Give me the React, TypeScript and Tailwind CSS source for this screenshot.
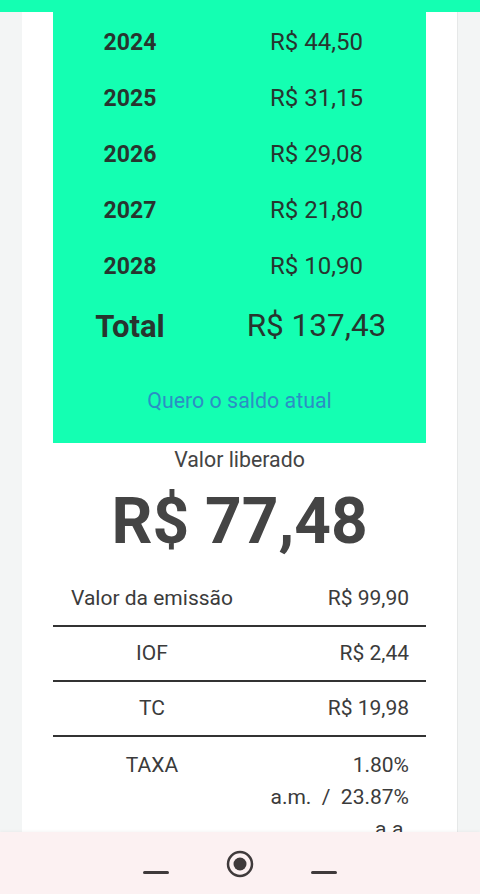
const years = [
  { year: "2024", value: "R$ 44,50" },
  { year: "2025", value: "R$ 31,15" },
  { year: "2026", value: "R$ 29,08" },
  { year: "2027", value: "R$ 21,80" },
  { year: "2028", value: "R$ 10,90" },
];

const details = [
  { label: "Valor da emissão", value: "R$ 99,90" },
  { label: "IOF", value: "R$ 2,44" },
  { label: "TC", value: "R$ 19,98" },
];

export default function App() {
  return (
    <div className="h-[894px] w-[480px] overflow-hidden flex flex-col bg-[#f3f5f5] font-['Roboto',sans-serif]">
      {/* top band, header scrolled away */}
      <div className="h-[12px] shrink-0 bg-[#14ffb2]" />

      <div className="flex-1 min-h-0 overflow-hidden mx-[22px] bg-white border-r border-[#e6e8e8]">
        {/* green summary box */}
        <div className="mx-[31px] bg-[#14ffb2] pt-[2px] h-[431px] text-[#27352f]">
          {years.map((r) => (
            <div key={r.year} className="grid grid-cols-[154px_1fr] h-[56px] items-center leading-none">
              <span className="text-center font-bold text-[23px]">{r.year}</span>
              <span className="text-center text-[24px]">{r.value}</span>
            </div>
          ))}
          <div className="grid grid-cols-[154px_1fr] h-[64px] items-center leading-none">
            <span className="text-center font-bold text-[31px]">Total</span>
            <span className="text-center text-[31.5px]">R$ 137,43</span>
          </div>
          <div className="h-[86px] flex items-center justify-center">
            <button className="text-[21.4px] text-[#2b8fc4]">Quero o saldo atual</button>
          </div>
        </div>

        <p className="text-center text-[21.3px] text-[#444] mt-[5px] leading-[24px]">Valor liberado</p>
        <p className="text-center text-[64px] font-bold text-[#444] leading-[76px] mt-[12px]">R$ 77,48</p>

        <div className="mx-[31px] mt-[12px] text-[21px] text-[#3b3b3b]">
          {details.map((d) => (
            <div key={d.label} className="grid grid-cols-[198px_1fr] h-[55px] items-center border-b-2 border-[#333] pr-[17px]">
              <span className="text-center">{d.label}</span>
              <span className="text-right">{d.value}</span>
            </div>
          ))}
          <div className="grid grid-cols-[198px_1fr] pr-[17px] pt-[12px] leading-[32px]">
            <span className="text-center">TAXA</span>
            <span className="text-right">
              1.80%
              <br />
              a.m.&nbsp; /&nbsp; 23.87%
              <br />
              a.a.
            </span>
          </div>
        </div>
      </div>

      {/* system nav bar */}
      <div className="h-[62px] shrink-0 bg-[#fcf1f2] shadow-[0_-1px_3px_rgba(0,0,0,0.04)] flex items-center justify-center gap-[57px]">
        <div className="w-[26px] h-[3px] rounded-full bg-[#3f3a3b] mt-[18px]" />
        <svg width="28" height="28" viewBox="0 0 28 28" className="mt-[2px]">
          <circle cx="14" cy="14" r="12" fill="none" stroke="#3f3a3b" strokeWidth="2.5" />
          <circle cx="14" cy="14" r="6.5" fill="#3f3a3b" />
        </svg>
        <div className="w-[26px] h-[3px] rounded-full bg-[#3f3a3b] mt-[18px]" />
      </div>
    </div>
  );
}
